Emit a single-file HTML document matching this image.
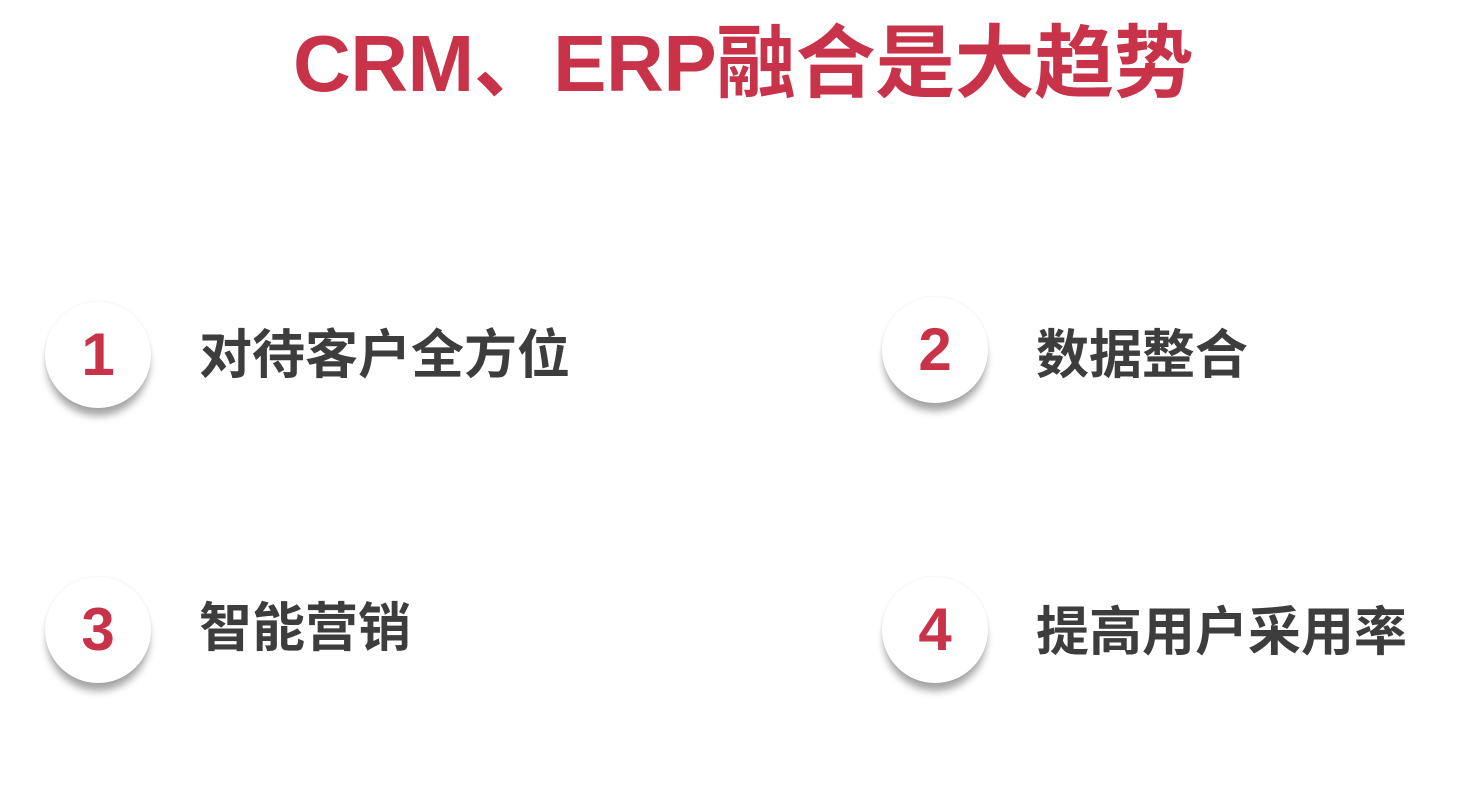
<!DOCTYPE html>
<html><head><meta charset="utf-8"><style>
body{margin:0;width:1478px;height:785px;background:#fff;overflow:hidden;position:relative;font-family:"Liberation Sans","Noto Sans CJK SC",sans-serif}
.t{position:absolute;left:293px;top:9px;font-size:80px;font-weight:bold;color:#c8334a;white-space:nowrap;line-height:110px;letter-spacing:-0.5px}
.c{position:absolute;width:106px;height:106px;border-radius:50%;background:#fff;box-shadow:0 10px 8px -2px rgba(0,0,0,.35),0 0 3px rgba(0,0,0,.08);color:#c8334a;font-size:60px;font-weight:bold;text-align:center;line-height:106px}
.l{position:absolute;font-size:53px;font-weight:bold;color:#3d3d3d;line-height:60px;white-space:nowrap}
</style></head><body>
<div class="t">CRM、ERP融合是大趋势</div>
<div class="c" style="left:45px;top:302px">1</div>
<div class="l" style="left:199px;top:326px">对待客户全方位</div>
<div class="c" style="left:882px;top:297px">2</div>
<div class="l" style="left:1036px;top:326px">数据整合</div>
<div class="c" style="left:45px;top:577px">3</div>
<div class="l" style="left:199px;top:599px">智能营销</div>
<div class="c" style="left:882px;top:577px">4</div>
<div class="l" style="left:1036px;top:603px">提高用户采用率</div>
</body></html>
